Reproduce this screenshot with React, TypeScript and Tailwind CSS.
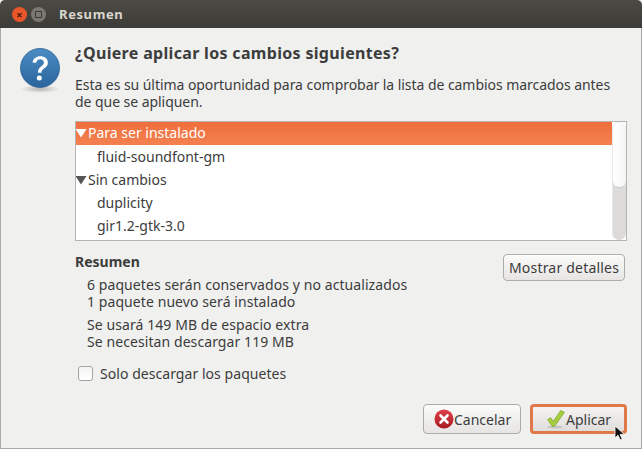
import React from "react";

function Tri({ color }: { color: string }) {
  return (
    <svg width="12" height="10" viewBox="0 0 12 10" className="shrink-0 -ml-px">
      <polygon points="0.5,1 11.5,1 6,9.5" fill={color} />
    </svg>
  );
}

function QuestionIcon() {
  return (
    <svg width="42" height="48" viewBox="0 0 42 48" className="shrink-0">
      <defs>
        <linearGradient id="q" x1="0" y1="0" x2="0" y2="1">
          <stop offset="0" stopColor="#4b8cc4" />
          <stop offset="1" stopColor="#2a659c" />
        </linearGradient>
        <radialGradient id="s">
          <stop offset="0" stopColor="#000" stopOpacity="0.25" />
          <stop offset="1" stopColor="#000" stopOpacity="0" />
        </radialGradient>
      </defs>
      <ellipse cx="21" cy="42" rx="20" ry="4" fill="url(#s)" />
      <circle cx="21" cy="21" r="19.5" fill="url(#q)" stroke="#2b6194" strokeWidth="0.8" />
      <path d="M13.5 15.5c.6-4 3.6-6.3 7.8-6.3 4.6 0 7.6 2.6 7.6 6.2 0 2.8-1.5 4.3-3.6 5.8-2 1.4-2.8 2.3-2.8 4.6h-3.6c0-3.3 1.1-4.8 3.2-6.4 1.7-1.3 2.8-2.2 2.8-3.9 0-1.9-1.5-3.2-3.7-3.2-2.3 0-3.6 1.3-4 3.4z" fill="#fff" />
      <circle cx="20.3" cy="31" r="2.5" fill="#fff" />
    </svg>
  );
}

function Row({ children, selected, indent }: { children: React.ReactNode; selected?: boolean; indent?: boolean }) {
  return (
    <div
      className={
        "h-[23px] flex items-center whitespace-nowrap " +
        (indent ? "pl-[21px] " : "pl-0 ") +
        (selected ? "pb-[2px] bg-gradient-to-b from-[#ee6e3c] to-[#f58150] text-white" : "text-[#3c3c3c]")
      }
    >
      {children}
    </div>
  );
}

export default function App() {
  return (
    <div className="w-[642px] h-[449px] flex flex-col overflow-hidden bg-[#f0f0ef] text-[#3c3c3c] text-[14px] leading-[17px] font-['Noto_Sans',sans-serif]">
      <div className="h-[28px] shrink-0 flex items-center pl-[12px] bg-gradient-to-b from-[#4b4a45] to-[#3c3b37] rounded-t-[5px]">
        <div className="w-[15px] h-[15px] rounded-full bg-[#e8562a] flex items-center justify-center text-[#4a1a08] text-[11px] leading-none font-bold">×</div>
        <div className="w-[15px] h-[15px] rounded-full bg-[#7a7872] ml-[4px] flex items-center justify-center">
          <div className="w-[7px] h-[7px] border border-[#3c3b37]" />
        </div>
        <div className="ml-[13px] text-[#d9d6cc] font-bold text-[13px] tracking-[0.6px]">Resumen</div>
      </div>

      <div className="flex-1 flex flex-col border-x border-b border-[#a9a8a4]">
        <div className="flex pl-[18px] pr-[14px] pt-[15px]">
          <div className="w-[56px] shrink-0 pt-[4px]">
            <QuestionIcon />
          </div>
          <div className="flex-1 min-w-0">
            <div className="text-[16px] leading-[20px] font-bold text-[#3c3c3c] tracking-[0.32px]">¿Quiere aplicar los cambios siguientes?</div>
            <div className="mt-[13px] text-[14px] tracking-[-0.05px]">
              Esta es su última oportunidad para comprobar la lista de cambios marcados antes
              <br />
              de que se apliquen.
            </div>
            <div className="mt-[11px] h-[120px] flex border border-[#b5b4b0] bg-white overflow-hidden text-[14px]">
              <div className="flex-1">
                <Row selected>
                  <Tri color="#fff" />
                  <span className="ml-px">Para ser instalado</span>
                </Row>
                <Row indent>fluid-soundfont-gm</Row>
                <Row>
                  <Tri color="#555" />
                  <span className="ml-px">Sin cambios</span>
                </Row>
                <Row indent>duplicity</Row>
                <Row indent>gir1.2-gtk-3.0</Row>
              </div>
              <div className="w-[14px] bg-[#dcdbd9] rounded-[7px] border-l border-[#e8e8e8]">
                <div className="h-[66px] rounded-[7px] bg-gradient-to-r from-[#ffffff] to-[#f4f4f4] border-b border-[#c8c8c8]" />
              </div>
            </div>
            <div className="flex justify-between mt-[13px] pr-[2px]">
              <div>
                <div className="font-bold text-[14px] -mt-px">Resumen</div>
                <div className="pl-[12px] mt-[6px] text-[14px] tracking-[0.08px]">
                  <div>6 paquetes serán conservados y no actualizados</div>
                  <div>1 paquete nuevo será instalado</div>
                  <div className="mt-[6px]">Se usará 149 MB de espacio extra</div>
                  <div>Se necesitan descargar 119 MB</div>
                </div>
              </div>
              <button className="h-[27px] w-[122px] rounded-[4px] border border-[#aeadaa] bg-gradient-to-b from-[#fbfbfa] to-[#e6e5e3] text-[14px] tracking-[0.2px] text-[#3c3c3c] shadow-[inset_0_1px_0_#fff]">
                Mostrar detalles
              </button>
            </div>
            <div className="flex items-center mt-[15px] ml-[3px]">
              <div className="w-[15px] h-[15px] rounded-[3px] border border-[#a5a4a0] bg-gradient-to-b from-[#f4f4f3] to-[#ffffff]" />
              <span className="ml-[7px] text-[14px] tracking-[0.05px]">Solo descargar los paquetes</span>
            </div>
          </div>
        </div>

        <div className="relative flex justify-end gap-[9px] mt-auto mb-[14px] pr-[14px]">
          <button className="h-[30px] w-[98px] rounded-[4px] border border-[#aeadaa] bg-gradient-to-b from-[#fbfbfa] to-[#e6e5e3] flex items-center pl-[10px] text-[14px]">
            <svg width="20" height="20" viewBox="0 0 20 20" className="shrink-0">
              <defs>
                <linearGradient id="r" x1="0" y1="0" x2="0" y2="1">
                  <stop offset="0" stopColor="#e0404a" />
                  <stop offset="1" stopColor="#a81c24" />
                </linearGradient>
              </defs>
              <circle cx="10" cy="10" r="9.5" fill="url(#r)" />
              <path d="M6.5 6.5l7 7M13.5 6.5l-7 7" stroke="#fff" strokeWidth="2.6" strokeLinecap="round" />
            </svg>
            <span>Cancelar</span>
          </button>
          <button className="h-[30px] w-[97px] rounded-[4px] border-[3px] border-[#e0784a] bg-gradient-to-b from-[#f4f3f2] to-[#dfdedb] flex items-center pl-[13px] text-[14px]">
            <svg width="20" height="20" viewBox="0 0 20 20" className="shrink-0">
              <ellipse cx="9" cy="18" rx="8" ry="1.5" fill="#000" opacity="0.12" />
              <path d="M1.5 10.5l3.2-1.8 2.6 3.6L14.6 1.5l3.9 1.7L8.6 17.3H6.2z" fill="#a5cd3d" stroke="#7ea32c" strokeWidth="0.7" />
            </svg>
            <span>Aplicar</span>
          </button>
          <svg width="14" height="16" viewBox="0 0 14 16" className="absolute left-[613px] top-[21px]">
            <path d="M1 1v12l3-2.8 2.2 4.6 2-.9-2.1-4.5h4.4z" fill="#111" stroke="#fff" strokeWidth="0.8" />
          </svg>
        </div>
      </div>
    </div>
  );
}
